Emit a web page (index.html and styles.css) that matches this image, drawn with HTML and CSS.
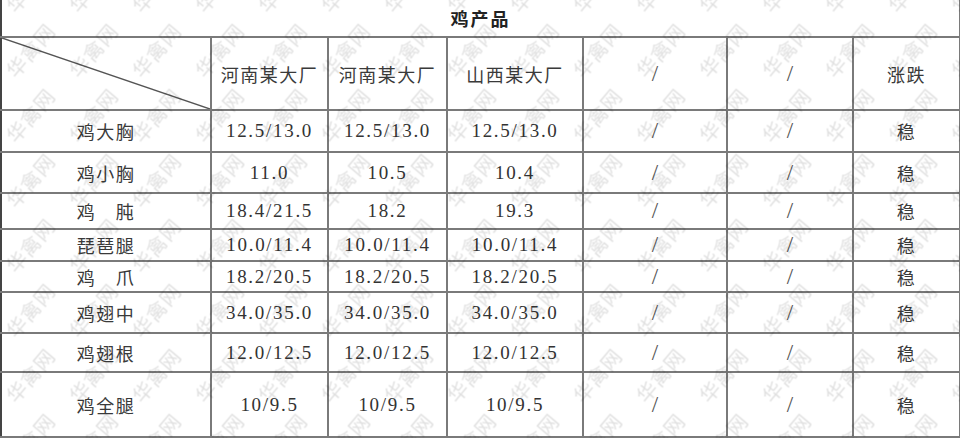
FILE: index.html
```html
<!DOCTYPE html>
<html lang="zh-CN">
<head>
<meta charset="utf-8">
<title>鸡产品</title>
<link rel="stylesheet" href="styles.css">
</head>
<body>
<div class="page">
  <table class="price">
    <colgroup>
      <col class="c1"><col class="c2"><col class="c3"><col class="c4"><col class="c5"><col class="c6"><col class="c7">
    </colgroup>
    <tr class="r-title"><td colspan="7" class="title">鸡产品</td></tr>
    <tr class="r-head">
      <td class="corner"><svg class="diag" viewBox="0 0 100 100" preserveAspectRatio="none"><line x1="0" y1="0" x2="100" y2="100" vector-effect="non-scaling-stroke"/></svg></td>
      <td class="zh">河南某大厂</td>
      <td class="zh">河南某大厂</td>
      <td class="zh">山西某大厂</td>
      <td class="num slash">/</td>
      <td class="num slash">/</td>
      <td class="zh">涨跌</td>
    </tr>
    <tr class="r1">
      <td class="zh">鸡大胸</td><td class="num">12.5/13.0</td><td class="num">12.5/13.0</td><td class="num">12.5/13.0</td><td class="num slash">/</td><td class="num slash">/</td><td class="zh">稳</td>
    </tr>
    <tr class="r2">
      <td class="zh">鸡小胸</td><td class="num">11.0</td><td class="num">10.5</td><td class="num">10.4</td><td class="num slash">/</td><td class="num slash">/</td><td class="zh">稳</td>
    </tr>
    <tr class="r3">
      <td class="zh">鸡　肫</td><td class="num">18.4/21.5</td><td class="num">18.2</td><td class="num">19.3</td><td class="num slash">/</td><td class="num slash">/</td><td class="zh">稳</td>
    </tr>
    <tr class="r4">
      <td class="zh">琵琶腿</td><td class="num">10.0/11.4</td><td class="num">10.0/11.4</td><td class="num">10.0/11.4</td><td class="num slash">/</td><td class="num slash">/</td><td class="zh">稳</td>
    </tr>
    <tr class="r5">
      <td class="zh">鸡　爪</td><td class="num">18.2/20.5</td><td class="num">18.2/20.5</td><td class="num">18.2/20.5</td><td class="num slash">/</td><td class="num slash">/</td><td class="zh">稳</td>
    </tr>
    <tr class="r6">
      <td class="zh">鸡翅中</td><td class="num">34.0/35.0</td><td class="num">34.0/35.0</td><td class="num">34.0/35.0</td><td class="num slash">/</td><td class="num slash">/</td><td class="zh">稳</td>
    </tr>
    <tr class="r7">
      <td class="zh">鸡翅根</td><td class="num">12.0/12.5</td><td class="num">12.0/12.5</td><td class="num">12.0/12.5</td><td class="num slash">/</td><td class="num slash">/</td><td class="zh">稳</td>
    </tr>
    <tr class="r8">
      <td class="zh">鸡全腿</td><td class="num">10/9.5</td><td class="num">10/9.5</td><td class="num">10/9.5</td><td class="num slash">/</td><td class="num slash">/</td><td class="zh">稳</td>
    </tr>
  </table>
  <svg class="watermark" width="960" height="438" aria-hidden="true">
    <defs>
      <pattern id="wm" patternUnits="userSpaceOnUse" x="-1.5" y="17.5" width="63" height="65">
        <text x="31.5" y="32.5" text-anchor="middle" dominant-baseline="central" transform="rotate(-50 31.5 32.5)">华禽网</text>
      </pattern>
    </defs>
    <rect x="0" y="0" width="960" height="438" fill="url(#wm)"/>
  </svg>
</div>
</body>
</html>
```
FILE: styles.css
```css
html, body {
  margin: 0;
  padding: 0;
  background: #ffffff;
}
.page {
  position: relative;
  width: 960px;
  height: 438px;
  overflow: hidden;
}
.price {
  width: 959px;
  border-collapse: collapse;
  table-layout: fixed;
  color: #3a3a3a;
}
.c1 { width: 210px; }
.c2 { width: 117px; }
.c3 { width: 119px; }
.c4 { width: 136px; }
.c5 { width: 144px; }
.c6 { width: 126px; }
.c7 { width: 107px; }

.price td {
  border: 2px solid #7a7a7a;
  padding: 0;
  text-align: center;
  vertical-align: middle;
}
.price tr > td:first-child {
  border-left-color: #444444;
}
.r-title td {
  border-top: none;
}
.r-title { height: 37px; }
.r-head { height: 73px; }
.r1 { height: 42px; }
.r2 { height: 41px; }
.r3 { height: 36px; }
.r4 { height: 32px; }
.r5 { height: 31px; }
.r6 { height: 41px; }
.r7 { height: 39px; }
.r8 { height: 65px; }

.title {
  font-family: "Noto Sans CJK SC", sans-serif;
  font-weight: 700;
  font-size: 18px;
  letter-spacing: 2px;
  color: #222222;
  padding-top: 3px;
}
.zh {
  font-family: "Noto Sans CJK SC", sans-serif;
  font-size: 18px;
  letter-spacing: 1.5px;
}
.num {
  font-family: "Liberation Serif", serif;
  font-size: 19px;
  letter-spacing: 1.7px;
  color: #333333;
}
.slash {
  font-size: 23px;
  letter-spacing: 0;
  color: #555555;
  font-weight: 300;
}
.corner {
  position: relative;
}
.diag {
  position: absolute;
  left: 0;
  top: 0;
  width: 100%;
  height: 100%;
  display: block;
}
.diag line {
  stroke: #555555;
  stroke-width: 1.4;
}
.watermark {
  position: absolute;
  left: 0;
  top: 0;
  pointer-events: none;
}
.watermark text {
  font-family: "Noto Sans CJK SC", sans-serif;
  font-size: 20px;
  font-weight: 400;
  letter-spacing: 1px;
  fill: #000000;
  fill-opacity: 0.12;
}
```
